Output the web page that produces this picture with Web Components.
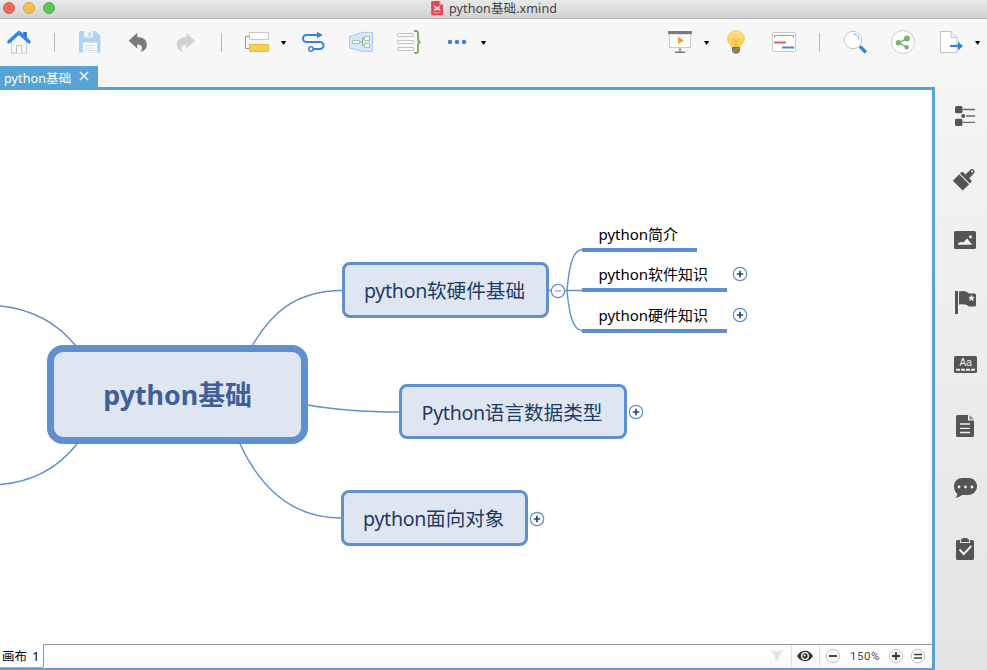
<!DOCTYPE html>
<html lang="zh-CN">
<head>
<meta charset="utf-8">
<title>python基础.xmind</title>
<style>
html,body{margin:0;height:100%;overflow:hidden}
body{font-family:"Noto Sans","Noto Sans CJK SC",sans-serif;color:#111}
</style>
</head>
<body>
<app-window></app-window>
<script>
const define = (name, html) => customElements.define(name, class extends HTMLElement {
  connectedCallback() {
    if (this.shadowRoot) return;
    const t = document.createElement('template');
    t.innerHTML = typeof html === 'function' ? html(this) : html;
    this.attachShadow({mode: 'open'}).append(t.content.cloneNode(true));
  }
});

/* Each drawing: [viewBox, markup]; the element takes the viewBox's size. */
const ICONS = {
  home: ['6 28 26 28', `<path d="M11.500 41v12.200h15V41L19 34.500z" fill="#f7f7f7" stroke="#c9c9c9"/><path d="M16.500 53v-7.500h5V53" fill="#fff" stroke="#bdbdbd"/><path d="M23.200 32h3.600v7l-3.600-3.500z" fill="#2a70dc"/><path d="M9 41.800L19 32.600l10 9.200" fill="none" stroke="#3b84ec" stroke-width="3.600" stroke-linecap="round" stroke-linejoin="round"/>`],
  save: ['78 28 24 28', `<path d="M80 31h15.500l5 5v16.500h-21.500V32z" fill="#b1d3f6"/><path d="M84 31h9v6.500H84z" fill="#f2f2f2"/><path d="M88.500 32.500h2.500v4h-2.500z" fill="#b1d3f6"/><path d="M83 42.500h14v10H83z" fill="#fafafa"/><path d="M85 45.500h10M85 48h10M85 50.500h10" stroke="#dcdcdc"/>`],
  undo: ['127 28 22 28', `<path d="M128.700 40.700l8.600-8v4.300c7 0 9.500 4 9.500 7.500 0 4-2.500 6.800-6.500 7.300 2.700-2.800 2.500-7.300-3-7.300v4z" fill="#7b7b7b"/>`],
  redo: ['176 28 21 28', `<path d="M195 40.700l-8.600-8v4.300c-7 0-9.500 4-9.500 7.500 0 4 2.500 6.800 6.500 7.300-2.700-2.800-2.500-7.300 3-7.300v4z" fill="#d2d2d2"/>`],
  topic: ['243 28 28 28', `<path d="M249 36.500h-3.500v12h3.500" fill="none" stroke="#999"/><path d="M249.500 32.500h19v7h-19z" fill="#fcfcfc" stroke="#c6c6c6"/><path d="M249.500 44.500h19v7h-19z" fill="#f8cf54" stroke="#ebbc38"/>`],
  caret: ['280 28 7 28', `<path d="M281 41h5.200l-2.600 4z" fill="#000"/>`],
  relation: ['301 28 25 28', `<path d="M318 35h-11.500a3.500 3.500 0 0 0 0 7H320a3.500 3.500 0 0 1 0 7h-7" fill="none" stroke="#3b80df" stroke-width="2"/><path d="M317 31.800l5.800 3.200-5.800 3.200z" fill="#3b80df"/><circle cx="311" cy="49" r="2.200" fill="#fff" stroke="#3b80df" stroke-width="1.500"/>`],
  boundary: ['348 28 26 28', `<path d="M349.500 36.500l13-4.200h10v19.200h-10l-13-3.500z" fill="#d6e7fb" stroke="#78a9e9" stroke-dasharray="1 1"/><path d="M359.500 42h3m2-4h-2v7.500h2" fill="none" stroke="#8bb18b"/><path d="M352.500 40.500h7v3h-7zm12-4h5v4h-5zm0 7h5v4h-5z" fill="#fff" stroke="#a4c49d"/>`],
  summary: ['396 28 26 28', `<g fill="#fcfcfc" stroke="#c4c4c4"><rect x="397.500" y="33.500" width="16" height="3" rx=".5"/><rect x="397.500" y="40.500" width="16" height="3" rx=".5"/><rect x="397.500" y="47.500" width="16" height="3" rx=".5"/></g><path d="M414 31h2q2 0 2 2v6q0 3 2.500 3-2.500 0-2.500 3v6q0 2-2 2h-2" fill="none" stroke="#77b065" stroke-width="1.900"/>`],
  dots: ['446 28 22 28', `<g fill="#3b80df"><circle cx="450" cy="42" r="2.200"/><circle cx="457" cy="42" r="2.200"/><circle cx="464" cy="42" r="2.200"/></g>`],
  present: ['667 28 26 28', `<path d="M669.500 34h21v13.500h-21z" fill="#fff" stroke="#c8c8c8"/><rect x="668" y="31" width="24" height="3" rx=".7" fill="#7b7b7b"/><path d="M678 36.800l6 3.600-6 3.800z" fill="#efa53b"/><path d="M680 48v4.300m-5 0h10" fill="none" stroke="#777" stroke-width="1.400"/>`],
  bulb: ['726 28 20 28', `<defs><linearGradient id="g" x2="0" y2="1"><stop stop-color="#fbdc8c"/><stop offset="1" stop-color="#f9cd43"/></linearGradient></defs><path d="M727.300 39a8.600 8.600 0 1 1 17.200 0c0 4-4.200 5.500-4.700 8.500h-7.800c-.5-3-4.700-4.500-4.700-8.500z" fill="url(#g)" stroke="#efc44c" stroke-width=".6"/><path d="M733 39l3 3 3-3m-3 3v5" fill="none" stroke="#dda62f" stroke-width=".9"/><path d="M732 47h8v4l-2 2.500h-4l-2-2.500z" fill="#6e6b66"/><path d="M732.500 49.500l7-1.300m-7 3.400l7-1.300" stroke="#d3ad48" stroke-width=".7"/>`],
  gantt: ['771 28 26 28', `<rect x="772.500" y="32.500" width="23" height="19" rx=".8" fill="#fff" stroke="#c8c8c8"/><path d="M774.500 38v-2.500h19V38" fill="none" stroke="#999"/><path d="M774 42.500h12" stroke="#e3615b" stroke-width="2"/><path d="M782 47.500h12" stroke="#4a88e3" stroke-width="2"/>`],
  search: ['843 28 25 28', `<circle cx="853" cy="40" r="8.700" fill="#fff" stroke="#c5c5c5"/><path d="M853.500 34a6 6 0 0 1 5.500 5.500" fill="none" stroke="#69a4ec"/><path d="M861 47.500l3.800 3.800" stroke="#3b80df" stroke-width="3.300" stroke-linecap="square"/>`],
  share: ['890 28 26 28', `<circle cx="903" cy="42" r="11.500" fill="#fff" stroke="#cbcbcb"/><path d="M907 38.500l-8.500 4.200 8 4.300" fill="none" stroke="#78b365" stroke-width="1.400"/><g fill="#78b365"><circle cx="907" cy="38.500" r="2.900"/><circle cx="898.300" cy="42.700" r="2.600"/><circle cx="906.600" cy="47.200" r="2.200"/></g>`],
  export: ['939 28 26 28', `<path d="M940.500 31.500h10.500l6 6v15h-16.500z" fill="#fff" stroke="#c5c5c5"/><path d="M951 31.500v6h6" fill="#eee" stroke="#c5c5c5"/><path d="M950 46h9" stroke="#3b80df" stroke-width="2.200"/><path d="M958 41.500l5 4.500-5 4.500z" fill="#3b80df"/>`],
  outline: ['951 102 28 28', `<g fill="#555"><rect x="955" y="106" width="7.500" height="7.300" rx="1.600"/><rect x="955" y="118.800" width="7.500" height="7.300" rx="1.600"/><circle cx="963.200" cy="116" r="2"/></g><path d="M963 109.500h12M966 116h9M963 122.400h12" stroke="#6a6a6a" stroke-width="1.400"/>`],
  brush: ['951 164 28 28', `<g transform="translate(964 178.700) rotate(45)" fill="#555"><path d="M-2-4l.2-7.600a2.700 2.700 0 0 1 5 0L3.400-4H6a1.500 1.500 0 0 1 1.500 1.500v1.700h-14v-1.700A1.500 1.500 0 0 1-5-4z"/><path d="M-6.500.2h14V9.300h-14z"/><circle cx=".7" cy="-10.800" r="1" fill="#f2f2f2"/></g>`],
  image: ['951 226 28 28', `<rect x="954" y="231" width="22" height="18" rx="1.600" fill="#555"/><path d="M958 244.700v-1.500l3.500-1.500 1.500 1 4-4.200 5.300 6.200z" fill="#f4f4f4"/><circle cx="970.500" cy="236.700" r="1.500" fill="#f4f4f4"/>`],
  marker: ['951 288 28 28', `<path d="M955 291h3v23h-3z" fill="#555"/><path d="M959 291.500q5-1 8 .5 1.500 1.500 2.500 1.500h5q1.500 0 1.500 1.500v10q0 1.500-1.500 1.500h-5q-1.500 0-2.500-1.500-3-1-8-.5z" fill="#555"/><path d="M971.500 295.300l.8 1.900 2 .1-1.500 1.300.5 2-1.800-1.100-1.700 1.100.5-2-1.600-1.300 2.100-.1z" fill="#f2f2f2" stroke="#f2f2f2" stroke-width=".6"/>`],
  label: ['951 350 28 28', `<rect x="954" y="356" width="23" height="17" rx="1.600" fill="#555"/><text x="965.700" y="366" text-anchor="middle" font-family="Liberation Sans,sans-serif" font-size="10" fill="#f2f2f2">Aa</text><path d="M956 369.700h19" stroke="#eee" stroke-width="2" stroke-dasharray="4 1"/>`],
  notes: ['951 412 28 28', `<path d="M957.500 415H968v5.500h6v15q0 1.500-1.500 1.500h-15q-1.500 0-1.500-1.500v-19q0-1.500 1.500-1.500z" fill="#555"/><path d="M969.500 415l4.500 4.300h-4.500z" fill="#888"/><path d="M960 424h10M960 428.300h10M960 432.500h10" stroke="#f0f0f0" stroke-width="1.300"/>`],
  comment: ['951 474 28 28', `<path d="M962.500 478h6c4.500 0 8.500 3.500 8.500 8.300s-4 8.700-8.500 8.700h-6.500c-2 1.500-4 2.700-6.700 2.700 1.200-.8 1.800-2.200 2-3.800-2-1.500-3.300-4.200-3.300-7.600 0-4.800 4-8.300 8.500-8.300z" fill="#555"/><g fill="#f0f0f0"><circle cx="959" cy="487" r="1.400"/><circle cx="965.500" cy="487" r="1.400"/><circle cx="972" cy="487" r="1.400"/></g>`],
  task: ['951 536 28 28', `<path d="M957.500 540h2.500v3h10v-3h2.500q1.500 0 1.500 1.500v17q0 1.500-1.500 1.500h-15q-1.500 0-1.500-1.500v-17q0-1.500 1.500-1.500z" fill="#555"/><path d="M961 539.300h1.500v-1.300h5v1.300h1.500v2.700h-8z" fill="#555"/><path d="M959.500 549.500l4.300 4.500 7.500-8" fill="none" stroke="#f0f0f0" stroke-width="1.900"/>`],
  file: ['430 0 14 17', `<path d="M432 1h7.500l3.500 4v9.500q0 .8-.8.800H432q-.8 0-.8-.8V1.800q0-.8.800-.8z" fill="#e8445a"/><path d="M439.500 1v4h3.500z" fill="#f5a3ab"/><path d="M434.200 5.600l2.500 2 3.300-1.300-1.400 1.700 1.600 2.400-2.800-1.200-3.300 1.200 1.500-2.100z" fill="#fff" stroke="#fff" stroke-width=".6"/><path d="M433.500 12.700h7" stroke="#f7a0a8" stroke-width=".8"/>`],
  funnel: ['768 646 18 20', `<path d="M770 650h14l-5.300 6.200v5l-3.400-1.500v-3.500z" fill="#e2e2e2"/><ellipse cx="777" cy="650.500" rx="6" ry="1" fill="#f4f4f4"/>`],
  eye: ['796 646 18 20', `<path d="M797 656c4-6.900 12-6.900 16 0-4 6.900-12 6.900-16 0z" fill="#333"/><circle cx="805" cy="656" r="3.300" fill="#333" stroke="#fff" stroke-width="1.300"/><circle cx="804.500" cy="655.500" r="1" fill="#fff"/>`],
  minus: ['825 646 16 20', `<circle cx="833" cy="656" r="6.700" fill="#fafafa" stroke="#bcbcbc" stroke-width=".9"/><path d="M829 656h8" stroke="#333" stroke-width="1.800"/>`],
  plus: ['888 646 16 20', `<circle cx="896" cy="656" r="6.700" fill="#fafafa" stroke="#bcbcbc" stroke-width=".9"/><path d="M892 656h8m-4-4v8" stroke="#333" stroke-width="1.800"/>`],
  equal: ['910 646 16 20', `<circle cx="918" cy="656" r="6.700" fill="#fafafa" stroke="#bcbcbc" stroke-width=".9"/><path d="M914 654.500h8m-8 3.500h8" stroke="#444" stroke-width="1.600"/>`]
};
define('x-icon', el => {
  const [box, art] = ICONS[el.getAttribute('name')];
  const [, , w, h] = box.split(' ');
  return `<style>:host{display:block;flex:none}svg{display:block}</style><svg width="${w}" height="${h}" viewBox="${box}">${art}</svg>`;
});

define('title-bar', `<style>
:host{display:flex;flex:none;box-sizing:border-box;height:19px;border-bottom:1px solid #b4b4b4;background:linear-gradient(#e9e9e9,#d2d2d2);align-items:flex-start}
.lights{display:flex;gap:8px;padding:2px 0 0 3px;width:427px;box-sizing:border-box}
i{box-sizing:border-box;width:12px;height:12px;border-radius:50%;border:.5px solid #d95850;background:#ed6a5f}
i:nth-child(2){background:#f6be50;border-color:#dba63c}i:nth-child(3){background:#62c656;border-color:#53af47}
x-icon{margin-left:3px}
span{font-size:12.500px;letter-spacing:.1px;line-height:18px;margin-left:5px;color:#444;white-space:nowrap}
</style><div class="lights"><i></i><i></i><i></i></div><x-icon name="file"></x-icon><span><slot></slot></span>`);

define('tool-separator', `<style>:host{display:block;flex:none;width:1px;height:19px;margin-top:5px;background:#b8b8b8}</style>`);

define('tool-bar', `<style>
:host{display:flex;flex:none;justify-content:space-between;height:38px;padding:9px 6px 0}
div{display:flex}
</style>
<div>
<x-icon name="home"></x-icon><tool-separator style="margin-left:22px"></tool-separator>
<x-icon name="save" style="margin-left:23px"></x-icon><x-icon name="undo" style="margin-left:25px"></x-icon>
<x-icon name="redo" style="margin-left:27px"></x-icon><tool-separator style="margin-left:24px"></tool-separator>
<x-icon name="topic" style="margin-left:21px"></x-icon><x-icon name="caret" style="margin-left:9px"></x-icon>
<x-icon name="relation" style="margin-left:14px"></x-icon><x-icon name="boundary" style="margin-left:22px"></x-icon>
<x-icon name="summary" style="margin-left:22px"></x-icon><x-icon name="dots" style="margin-left:24px"></x-icon>
<x-icon name="caret" style="margin-left:12px"></x-icon>
</div><div>
<x-icon name="present"></x-icon><x-icon name="caret" style="margin-left:10px"></x-icon>
<x-icon name="bulb" style="margin-left:16px"></x-icon><x-icon name="gantt" style="margin-left:25px"></x-icon>
<tool-separator style="margin-left:22px"></tool-separator><x-icon name="search" style="margin-left:23px"></x-icon>
<x-icon name="share" style="margin-left:22px"></x-icon><x-icon name="export" style="margin-left:23px"></x-icon>
<x-icon name="caret" style="margin-left:9px"></x-icon>
</div>`);

define('doc-tab', `<style>
:host{display:flex;flex:none;box-sizing:border-box;width:98px;height:21px;padding-left:4px;background:#56a3d5;color:#fff;font-size:12.500px;letter-spacing:.12px;line-height:25px;white-space:nowrap}
svg{margin:5px 0 0 8px;flex:none}
</style><slot></slot><svg width="10" height="10" viewBox="0 0 10 10"><path d="M1 1l8 8M9 1l-8 8" stroke="#fff" stroke-width="1.400"/></svg>`);

define('map-topic', `<style>
:host{position:absolute;box-sizing:border-box;display:flex;align-items:center;justify-content:center;padding-top:3px;border:3px solid #608fd0;border-radius:8px;background:#dfe6f1;color:#203a66;font-size:19.600px;line-height:28px;white-space:nowrap}
:host([central]){padding-top:0;border-width:7.500px;border-radius:16px;color:#3e6096;font-size:26.800px;font-weight:700}
</style><slot></slot>`);
define('map-subtopic', `<style>
:host{position:absolute;box-sizing:border-box;height:33px;padding-left:17px;border-bottom:4px solid #608fd0;color:#000;font-size:15px;line-height:35px;white-space:nowrap}
span{position:relative;top:-2px}
</style><span><slot></slot></span>`);
define('map-toggle', el => `<style>:host{position:absolute;display:block;width:16px;height:16px}svg{display:block}</style>
<svg width="16" height="16" viewBox="-8 -8 16 16"><circle r="6.700" fill="#fff" stroke="#608fd0" stroke-width="1.200"/>${el.hasAttribute('open') ? '<path d="M-3.200 0h6.400" stroke="#7d95bb" stroke-width="1.100"/>' : '<path d="M-3.200 0h6.400M0-3.200v6.400" stroke="#2f4468" stroke-width="1.700"/>'}</svg>`);

define('map-canvas', `<style>
:host{display:block;flex:1;position:relative;overflow:hidden;background:#fff}
.links{position:absolute;inset:0}
.latin{letter-spacing:-.3px}
</style>
<svg class="links" width="932" height="554" viewBox="0 90 932 554" fill="none" stroke="#608fd0" stroke-width="1.400">
<path d="M0 306C32 309 58 324 76 346M0 484.500C32 482 58 468 77 444M252 346C272 312 296 291 342 290.500M308 405C336 410 366 412 399 412M240 444C262 491 294 518 341 518M548 290.500h34M567 290.500C569 268 572 250.500 582 249.500M567 290.500C569 312 572 329.500 582 330.500"/>
</svg>
<map-topic central style="left:47px;top:255px;width:261px;height:99px">python基础</map-topic>
<map-topic style="left:342px;top:172px;width:207px;height:55.500px"><span class="latin" style="margin-left:-2px">python</span>软硬件基础</map-topic>
<map-topic style="left:399px;top:293.500px;width:228px;height:55.500px"><span class="latin" style="margin-left:-2px">Python</span>语言数据类型</map-topic>
<map-topic style="left:340.500px;top:400px;width:187.500px;height:55.500px"><span class="latin" style="margin-left:-1px">python</span>面向对象</map-topic>
<map-subtopic style="left:581.500px;top:128.500px;width:115.500px">python简介</map-subtopic>
<map-subtopic style="left:581.500px;top:169px;width:145.500px">python软件知识</map-subtopic>
<map-subtopic style="left:581.500px;top:209.500px;width:145.500px">python硬件知识</map-subtopic>
<map-toggle open style="left:550px;top:192.500px"></map-toggle>
<map-toggle style="left:731.500px;top:176px"></map-toggle>
<map-toggle style="left:731.500px;top:216.500px"></map-toggle>
<map-toggle style="left:628px;top:314px"></map-toggle>
<map-toggle style="left:529px;top:420.500px"></map-toggle>`);

define('status-bar', `<style>
:host{display:flex;flex:none;height:24px;background:linear-gradient(#fff,#f8f8f8)}
.sheet{box-sizing:border-box;width:44px;height:24px;padding-left:2px;border-right:1px solid #999;border-bottom:1px solid #aaa;border-bottom-right-radius:3px;background:#fff;color:#000;font-size:12.500px;line-height:26px;word-spacing:2px;white-space:nowrap}
.bar{flex:1;box-sizing:border-box;display:flex;align-items:flex-start;justify-content:flex-end;border-top:1px solid #999;padding:1px 6px 0 0}
b{width:1px;height:22px;margin-top:-1px;background:#dedede}
.zoom{font:11.500px/20px Roboto,sans-serif;letter-spacing:.55px;color:#4b4b4b;width:38px;box-sizing:border-box;margin:0 0 0 9px}
</style><div class="sheet"><slot></slot></div>
<div class="bar"><x-icon name="funnel"></x-icon><b style="margin-left:5px"></b><x-icon name="eye" style="margin-left:4px"></x-icon><b style="margin-left:5px"></b><x-icon name="minus" style="margin-left:5px"></x-icon><span class="zoom">150%</span><x-icon name="plus"></x-icon><x-icon name="equal" style="margin-left:6px"></x-icon></div>`);

define('side-bar', `<style>:host{display:flex;flex:none;flex-direction:column;gap:34px;box-sizing:border-box;width:52px;padding:36px 0 0 16px}</style>
${['outline','brush','image','marker','label','notes','comment','task'].map(n => `<x-icon name="${n}"></x-icon>`).join('')}`);

define('app-window', `<style>
:host{display:flex;flex-direction:column;height:670px;width:987px;overflow:hidden;background:linear-gradient(#f7f7f7 60px,#f3f3f3 130px,#e4e4e4)}
.body{display:flex;flex:1;min-height:0}
.main{display:flex;flex-direction:column;width:935px}
.frame{display:flex;flex-direction:column;flex:1;min-height:0;border:solid #56a3d5;border-width:3px 3px 2px 0}
</style>
<title-bar>python基础.xmind</title-bar><tool-bar></tool-bar>
<div class="body"><div class="main"><doc-tab>python基础</doc-tab><div class="frame"><map-canvas></map-canvas><status-bar>画布 1</status-bar></div></div><side-bar></side-bar></div>`);
</script>
</body>
</html>
